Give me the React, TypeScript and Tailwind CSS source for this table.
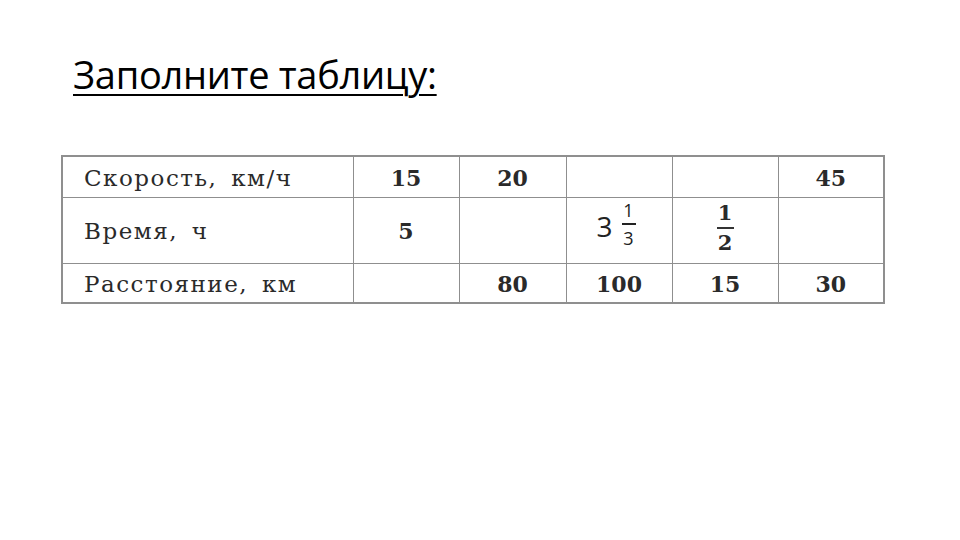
const serif = { fontFamily: '"DejaVu Serif", "Liberation Serif", serif' };
const sans = { fontFamily: '"Open Sans", "Noto Sans", sans-serif' };

function Fraction({ top, bottom }: { top: string; bottom: string }) {
  return (
    <span className="inline-flex flex-col items-center leading-none">
      <span className="pb-[4px]">{top}</span>
      <span className="h-[2px] w-[17px] bg-[#333]" />
      <span className="pt-[3px]">{bottom}</span>
    </span>
  );
}

export default function App() {
  const cell = "border border-[#8f8f8f] text-center align-middle";
  const num = "font-bold text-[22px] text-[#2a2a2a] pt-[3px]";
  const label =
    "border border-[#8f8f8f] text-left pl-[21px] pt-[3px] text-[23px] text-[#2a2a2a] tracking-[1.5px] [word-spacing:5px]";

  return (
    <div className="w-[960px] h-[540px] bg-white overflow-hidden">
      <div className="pl-[73px] pt-[50px]">
        <h1
          className="text-[38px] leading-[48px] font-medium text-black underline decoration-[2px] underline-offset-[5px] tracking-[-0.3px]"
          style={sans}
        >
          Заполните таблицу:
        </h1>
      </div>

      <div className="pl-[61px] pt-[57px]">
        <table className="table-fixed w-[822px] border-collapse border-2 border-[#8f8f8f]" style={serif}>
          <colgroup>
            <col className="w-[291px]" />
            <col className="w-[106px]" />
            <col className="w-[107px]" />
            <col className="w-[106px]" />
            <col className="w-[106px]" />
            <col className="w-[106px]" />
          </colgroup>
          <tbody>
            <tr className="h-[41px]">
              <td className={label}>Скорость, км/ч</td>
              <td className={`${cell} ${num}`}>15</td>
              <td className={`${cell} ${num}`}>20</td>
              <td className={cell}></td>
              <td className={cell}></td>
              <td className={`${cell} ${num}`}>45</td>
            </tr>
            <tr className="h-[66px]">
              <td className={label}>Время, ч</td>
              <td className={`${cell} ${num}`}>5</td>
              <td className={cell}></td>
              <td className={`${cell} pb-[8px]`}>
                <span className="inline-flex items-center gap-[9px] text-[#222] pr-[6px]" style={sans}>
                  <span className="text-[28px] leading-none">3</span>
                  <span className="inline-flex flex-col items-center text-[18px] leading-none -mt-[4px]">
                    <span className="pb-[4px]">1</span>
                    <span className="h-[2px] w-[14px] bg-[#222]" />
                    <span className="pt-[4px]">3</span>
                  </span>
                </span>
              </td>
              <td className={`${cell} font-bold text-[#2a2a2a] pb-[6px]`}>
                <span className="inline-flex text-[21px]">
                  <Fraction top="1" bottom="2" />
                </span>
              </td>
              <td className={cell}></td>
            </tr>
            <tr className="h-[40px]">
              <td className={label}>Расстояние, км</td>
              <td className={cell}></td>
              <td className={`${cell} ${num}`}>80</td>
              <td className={`${cell} ${num}`}>100</td>
              <td className={`${cell} ${num}`}>15</td>
              <td className={`${cell} ${num}`}>30</td>
            </tr>
          </tbody>
        </table>
      </div>
    </div>
  );
}
